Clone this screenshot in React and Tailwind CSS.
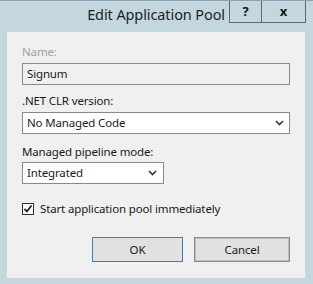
import React from "react";

function Chevron() {
  return (
    <svg width="9" height="6" viewBox="0 0 9 6" className="shrink-0">
      <path d="M1 1 L4.5 4.5 L8 1" fill="none" stroke="#333" strokeWidth="1.6" />
    </svg>
  );
}

export default function App() {
  const font = { fontFamily: '"Noto Sans", "Segoe UI", sans-serif' };
  return (
    <div className="w-[313px] h-[284px] bg-[#c4d7df] flex flex-col overflow-hidden border-t border-[#8fa3ad]" style={font}>
      <div className="h-[31px] flex items-start shrink-0">
        <div className="flex-1 flex justify-end pr-[4px] pt-[3px]">
          <span className="text-[14.5px] leading-[20px] text-[#1e1e1e] tracking-[-0.1px]">Edit Application Pool</span>
        </div>
        <div className="flex mr-[7px]">
          <div className="w-[33px] h-[22px] border border-t-0 border-[#5b6a72] flex items-center justify-center text-[13px] font-bold text-[#111]">?</div>
          <div className="w-[44px] h-[22px] border border-t-0 border-l-0 border-[#5b6a72] flex items-center justify-center text-[13px] font-bold text-[#111]">x</div>
        </div>
      </div>
      <div className="ml-[7px] mr-[8px] h-[246px] bg-[#f0f0f0] flex flex-col px-[15px] pt-[12px] text-[11.5px] tracking-[-0.15px] text-[#1a1a1a]">
        <div className="leading-[16px] text-[#a0a0a0]">Name:</div>
        <div className="mt-[3px] h-[22px] border border-[#8a8a8a] bg-[#f0f0f0] flex items-center px-[4px] leading-[16px]">Signum</div>
        <div className="mt-[8px] leading-[16px]">.NET CLR version:</div>
        <div className="mt-[3px] h-[22px] border border-[#8a8a8a] bg-white flex items-center justify-between pl-[4px] pr-[5px] leading-[16px]">
          <span>No Managed Code</span>
          <Chevron />
        </div>
        <div className="mt-[10px] leading-[16px]">Managed pipeline mode:</div>
        <div className="mt-[2px] w-[142px] h-[22px] border border-[#8a8a8a] bg-white flex items-center justify-between pl-[4px] pr-[6px] leading-[16px]">
          <span>Integrated</span>
          <Chevron />
        </div>
        <div className="mt-[17px] flex items-center h-[16px]">
          <div className="w-[12px] h-[12px] border border-[#333] bg-white flex items-center justify-center">
            <svg width="10" height="10" viewBox="0 0 10 10">
              <path d="M1.5 5 L4 7.5 L8.5 1.5" fill="none" stroke="#222" strokeWidth="1.8" />
            </svg>
          </div>
          <span className="ml-[6px] leading-[16px]">Start application pool immediately</span>
        </div>
        <div className="mt-[20px] flex justify-end gap-[11px]">
          <div className="w-[91px] h-[25px] border border-[#3c7fb1] bg-[#e1e1e1] flex items-center justify-center leading-[16px]">OK</div>
          <div className="w-[96px] h-[25px] border border-[#8c8c8c] bg-[#e1e1e1] flex items-center justify-center leading-[16px] shadow-[inset_0_0_0_1px_#bdbdbd]">Cancel</div>
        </div>
      </div>
    </div>
  );
}
